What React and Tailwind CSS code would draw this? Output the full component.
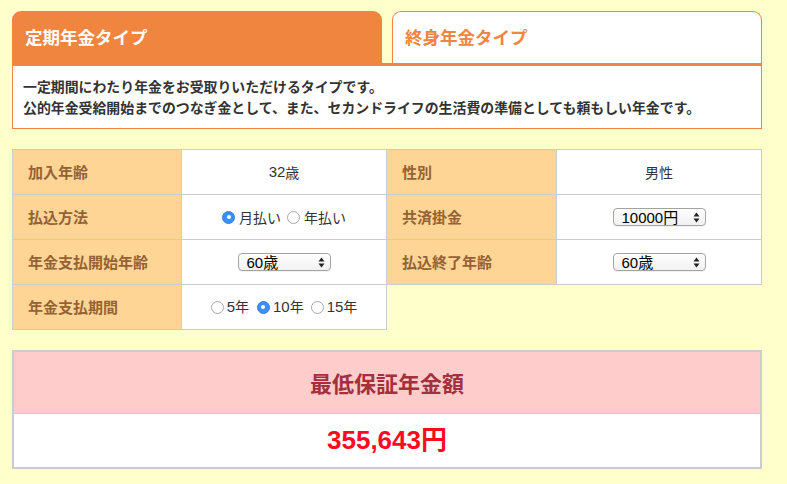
import React from "react";

const FONT = { fontFamily: '"Noto Sans CJK JP", "Noto Sans", sans-serif' };
const NUMFONT = { fontFamily: '"Liberation Sans", "Noto Sans CJK JP", sans-serif' };

function Radio({ checked }) {
  return checked ? (
    <span className="inline-flex h-[13px] w-[13px] items-center justify-center rounded-full bg-[#3b8ff6] border border-[#2f7fe6]">
      <span className="h-[4px] w-[4px] rounded-full bg-white" />
    </span>
  ) : (
    <span className="inline-block h-[13px] w-[13px] rounded-full border border-[#a8a8a8] bg-white" />
  );
}

function Select({ value }) {
  return (
    <div className="flex h-[18px] w-[93px] items-center justify-between rounded-[4px] border border-[#a3a3a3] bg-gradient-to-b from-white to-[#f1f1f1] pl-[8px] pr-[5px] shadow-[0_1px_0_rgba(0,0,0,0.05)]">
      <span className="text-[15px] leading-none text-black" style={NUMFONT}>{value}</span>
      <svg width="7" height="11" viewBox="0 0 7 11">
        <path d="M3.5 0.5 L6.5 4.5 L0.5 4.5 Z" fill="#222" />
        <path d="M3.5 10.5 L6.5 6.5 L0.5 6.5 Z" fill="#222" />
      </svg>
    </div>
  );
}

function Label({ children, first, top }) {
  return (
    <div
      className={
        "flex items-center bg-[#fed594] pl-[15px] text-[15px] font-bold text-[#946236] border-r border-b border-[#cccccc] " +
        (first ? "border-l " : "") +
        (top ? "border-t h-[46px]" : "h-[45px]")
      }
    >
      {children}
    </div>
  );
}

function Value({ children, top }) {
  return (
    <div
      className={
        "flex items-center justify-center bg-white text-[14px] text-[#333] border-r border-b border-[#cccccc] " +
        (top ? "border-t h-[46px]" : "h-[45px]")
      }
    >
      {children}
    </div>
  );
}

export default function App() {
  return (
    <div className="min-h-[484px] w-full bg-[#ffffcc] pl-[12px] pt-[11px]" style={FONT}>
      <div className="w-[750px]">
        {/* Tabs */}
        <div className="flex h-[52px] gap-[10px]">
          <div className="flex w-[370px] items-center rounded-t-[9px] bg-[#f08540] pl-[13px] text-[17.5px] font-bold text-white">
            定期年金タイプ
          </div>
          <div className="flex w-[370px] items-center rounded-t-[9px] border border-b-0 border-[#f08540] bg-white pl-[12px] text-[17.5px] font-bold text-[#f08540]">
            終身年金タイプ
          </div>
        </div>
        <div className="border border-t-[3px] border-[#f08540] bg-white px-[10px] py-[10px] text-[13.9px] font-bold leading-[21px] text-[#333]">
          <div>一定期間にわたり年金をお受取りいただけるタイプです。</div>
          <div>公的年金受給開始までのつなぎ金として、また、セカンドライフの生活費の準備としても頼もしい年金です。</div>
        </div>

        {/* Table */}
        <div className="mt-[20px] grid grid-cols-[170px_205px_170px_205px]">
          <Label first top>加入年齢</Label>
          <Value top>
            <span className="text-[15px]" style={NUMFONT}>32</span>歳
          </Value>
          <Label top>性別</Label>
          <Value top>男性</Value>

          <Label first>払込方法</Label>
          <Value>
            <div className="flex items-center text-[14px] text-[#333]">
              <Radio checked />
              <span className="ml-[4px]">月払い</span>
              <span className="ml-[6px]" />
              <Radio />
              <span className="ml-[4px]">年払い</span>
            </div>
          </Value>
          <Label>共済掛金</Label>
          <Value>
            <Select value="10000円" />
          </Value>

          <Label first>年金支払開始年齢</Label>
          <Value>
            <Select value="60歳" />
          </Value>
          <Label>払込終了年齢</Label>
          <Value>
            <Select value="60歳" />
          </Value>

          <Label first>年金支払期間</Label>
          <Value>
            <div className="flex items-center text-[14px] text-[#333]">
              <Radio />
              <span className="ml-[3px]"><span className="text-[15px]" style={NUMFONT}>5</span>年</span>
              <span className="ml-[8px]" />
              <Radio checked />
              <span className="ml-[3px]"><span className="text-[15px]" style={NUMFONT}>10</span>年</span>
              <span className="ml-[7px]" />
              <Radio />
              <span className="ml-[3px]"><span className="text-[15px]" style={NUMFONT}>15</span>年</span>
            </div>
          </Value>
        </div>

        {/* Result */}
        <div className="mt-[20px] border-2 border-[#cccccc] bg-white">
          <div className="flex h-[62px] items-center justify-center border-b border-[#cccccc] bg-[#ffcccc] text-[22px] font-bold text-[#a3303a]">
            最低保証年金額
          </div>
          <div className="flex h-[53px] items-center justify-center">
            <span className="text-[26px] font-bold text-[#ff0a1e]" style={NUMFONT}>355,643円</span>
          </div>
        </div>
      </div>
    </div>
  );
}
